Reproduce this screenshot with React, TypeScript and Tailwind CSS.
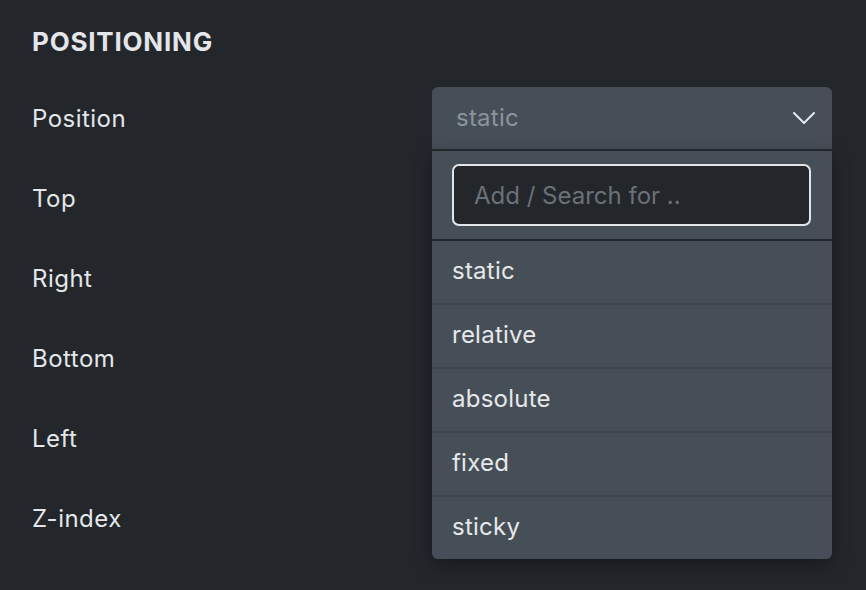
import { useState } from 'react';

const labels = ['Position', 'Top', 'Right', 'Bottom', 'Left', 'Z-index'];
const options = ['static', 'relative', 'absolute', 'fixed', 'sticky'];

function Chevron() {
  return (
    <svg width="22" height="12" viewBox="0 0 22 12" fill="none" className="text-[#e5e7eb]">
      <path d="M1 1l10 10L21 1" stroke="currentColor" strokeWidth="2" strokeLinecap="round" strokeLinejoin="round" />
    </svg>
  );
}

function PositionSelect() {
  const [query, setQuery] = useState('');
  return (
    <div className="relative w-[400px]">
      <button className="flex h-[62px] w-full items-center justify-between rounded-t-[6px] bg-[#464f58] pl-6 pr-[17px] text-[24px] tracking-[0.01em] text-[#8b949c]">
        <span>static</span>
        <Chevron />
      </button>
      <div className="absolute left-0 top-full z-10 w-full overflow-hidden rounded-b-[6px] border-t-2 border-[#23272b] bg-[#464f58] shadow-[0_6px_18px_rgba(0,0,0,0.35)]">
        <div className="border-b-2 border-[#23272b] px-5 py-[13px]">
          <input
            autoFocus
            value={query}
            onChange={(e) => setQuery(e.target.value)}
            placeholder="Add / Search for .."
            className="h-[62px] w-[359px] rounded-[7px] border-2 border-[#e3e5e8] bg-[#23272b] px-5 text-[24px] text-[#e5e7eb] caret-[#d1d5db] outline-none placeholder:text-[#6b7178]"
          />
        </div>
        {options.map((o, i) => (
          <div
            key={o}
            className={`flex items-center px-5 pb-[2px] text-[24px] tracking-[0.01em] text-[#e6e8ea] ${i < options.length - 1 ? 'h-16 border-b-2 border-[#3d444c]' : 'h-[62px]'}`}
          >
            {o}
          </div>
        ))}
      </div>
    </div>
  );
}

export default function App() {
  return (
    <div
      className="h-[590px] w-[866px] overflow-hidden bg-[#23272b] pl-8 pr-[34px] pt-6"
      style={{ fontFamily: 'Inter, "Noto Sans", sans-serif' }}
    >
      <h2 className="h-9 text-[26px] font-bold leading-9 tracking-[0.03em] text-[#e4e6e9]">POSITIONING</h2>
      <div className="mt-[18px] flex flex-col">
        {labels.map((l, i) => (
          <div key={l} className="flex h-20 items-center justify-between">
            <span className="pt-[2px] text-[24px] tracking-[0.02em] text-[#e4e6e9]">{l}</span>
            {i === 0 && <PositionSelect />}
          </div>
        ))}
      </div>
    </div>
  );
}
